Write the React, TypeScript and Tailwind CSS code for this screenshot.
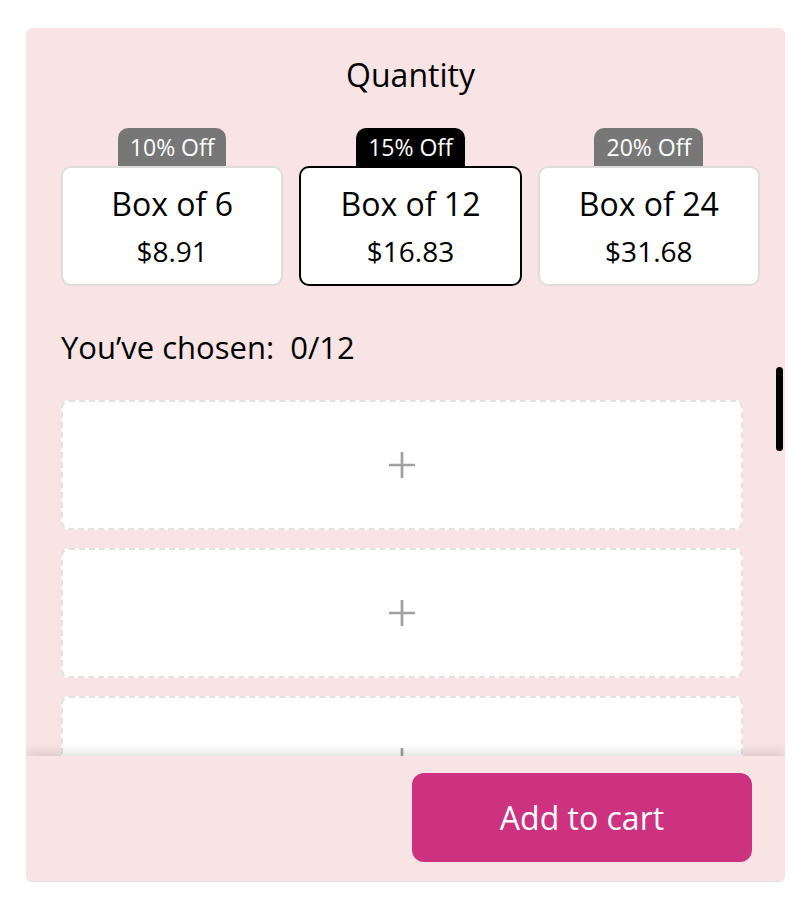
import { useState } from 'react';

const boxes = [
  { size: 6, price: '$8.91', off: '10% Off' },
  { size: 12, price: '$16.83', off: '15% Off' },
  { size: 24, price: '$31.68', off: '20% Off' },
];

function PlusIcon() {
  return (
    <svg width="28" height="28" viewBox="0 0 28 28" fill="none" stroke="#a0a0a0" strokeWidth="2.7">
      <path d="M14 1v26M1 14h26" />
    </svg>
  );
}

export default function App() {
  const [selected, setSelected] = useState(12);
  const chosen = 0;

  return (
    <div
      className="w-[806px] h-[902px] bg-white pt-[28px] pl-[26px]"
      style={{ fontFamily: '"Open Sans", sans-serif' }}
    >
      <div className="relative w-[759px] h-[854px] bg-[#f8e4e4] rounded-[6px] flex flex-col overflow-hidden border-b border-[#e2e2e2]">
        {/* 滚动区域 */}
        <div className="flex-1 overflow-hidden pl-[35px] pr-[25px]">
          <h2 className="mt-[29px] h-[36px] text-center text-[32px] leading-[36px] text-black">Quantity</h2>

          {/* 盒子选择 */}
          <div className="mt-[35px] grid grid-cols-3 gap-[16px]">
            {boxes.map((box) => {
              const active = box.size === selected;
              return (
                <button
                  key={box.size}
                  onClick={() => setSelected(box.size)}
                  className="flex flex-col items-center"
                >
                  <span
                    className={`h-[38px] px-[12px] rounded-t-[10px] text-[23px] leading-[38px] text-white ${
                      active ? 'bg-black' : 'bg-[#777777]'
                    }`}
                  >
                    {box.off}
                  </span>
                  <span
                    className={`w-full h-[120px] rounded-[10px] bg-white border-2 flex flex-col items-center justify-center ${
                      active ? 'border-black' : 'border-[#dddddd]'
                    }`}
                  >
                    <span className="mt-[2px] text-[32px] leading-[36px] text-black">Box of {box.size}</span>
                    <span className="mt-[12px] text-[28px] leading-[34px] text-black">{box.price}</span>
                  </span>
                </button>
              );
            })}
          </div>

          <p className="mt-[43px] text-[31px] leading-[36px] text-black">
            You’ve chosen:&nbsp; {chosen}/{selected}
          </p>

          {/* 空位 */}
          <div className="mt-[35px] pr-[17px] flex flex-col gap-[18px]">
            {[0, 1, 2].map((i) => (
              <div
                key={i}
                className="h-[130px] rounded-[8px] bg-white border-2 border-dashed border-[#e2e2e2] flex items-center justify-center"
              >
                <PlusIcon />
              </div>
            ))}
          </div>
        </div>

        {/* 滚动条 */}
        <div className="absolute left-[750px] top-[339px] w-[7px] h-[84px] rounded-full bg-black" />

        {/* 底部 */}
        <div className="relative h-[125px] shrink-0 bg-[#f8e4e4] shadow-[0_-4px_10px_rgba(0,0,0,0.12)] flex justify-end pt-[17px] pr-[33px]">
          <button className="w-[340px] h-[89px] rounded-[12px] bg-[#cd3280] text-white text-[32px]">
            Add to cart
          </button>
        </div>
      </div>
    </div>
  );
}
